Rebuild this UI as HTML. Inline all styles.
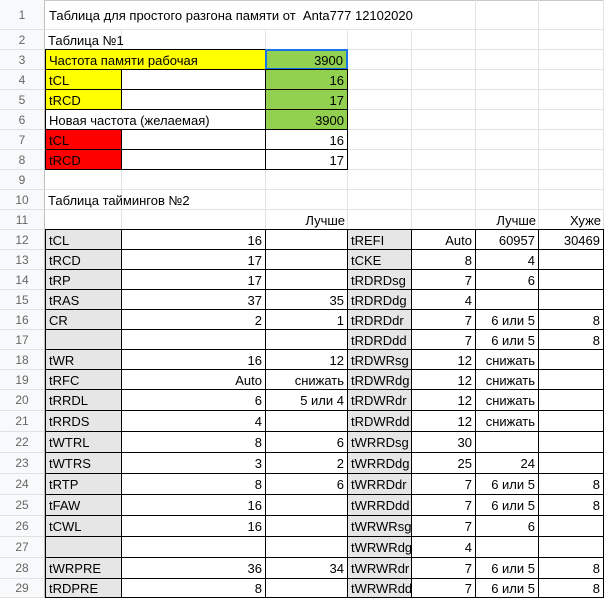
<!DOCTYPE html>
<html style="width:604px;height:598px;overflow:hidden"><head><meta charset="utf-8">
<style>
body{margin:0;width:604px;height:598px;overflow:hidden;background:#fff;position:relative;font-family:"Liberation Sans",Arial,sans-serif;font-size:13px;color:#000}
.c{position:absolute;box-sizing:border-box;overflow:hidden;white-space:nowrap;padding:1px 3px 0 3px;display:flex;align-items:center}
.r{justify-content:flex-end}
.h{position:absolute;left:0;width:45px;background:#f8f9fa;color:#666;font-size:12px;display:flex;align-items:center;justify-content:center;box-sizing:border-box;border-right:1px solid #c0c0c0;border-bottom:1px solid #e0e0e0}
.g{position:absolute;background:#e2e3e3}
</style></head><body>
<script>
const X=[46,122,266,348,412,476,539,604];
const tops={};tops[1]=0;for(let r=2;r<=19;r++)tops[r]=30+(r-2)*20;for(let r=20;r<=29;r++)tops[r]=390+(r-20)*21;tops[30]=598;
const H=r=>tops[r+1]-tops[r];
let out='';
for(let r=2;r<=29;r++)out+=`<div class="g" style="left:45px;top:${tops[r]-1}px;width:559px;height:1px"></div>`;
out+=`<div class="g" style="left:0;top:0;width:604px;height:1px;background:#c8c8c8"></div>`;
for(let i=1;i<X.length;i++){let top=(i>=5)?0:30;out+=`<div class="g" style="left:${X[i]-1}px;top:${top}px;width:1px;height:${598-top}px"></div>`;}
for(let r=1;r<=29;r++)out+=`<div class="h" style="top:${tops[r]}px;height:${H(r)}px">${r}</div>`;
function cell(r,c1,c2,txt,opt={}){
 const l=X[c1],w=X[c2+1]-X[c1];
 let h=H(r)+1; if(tops[r]-1+h>598)h=598-(tops[r]-1);
 out+=`<div class="c ${opt.right?'r':''}" style="left:${l-1}px;top:${tops[r]-1}px;width:${Math.min(w+1,604-(l-1))}px;height:${h}px;background:${opt.bg||'transparent'};${opt.bd?'border:1px solid #000;':''}${opt.st||''}">${txt}</div>`;
}
out+=`<div class="c" style="left:46px;top:0;height:30px;width:400px">Таблица для простого разгона памяти от&nbsp; Anta777 12102020</div>`;
cell(2,0,1,'Таблица №1');
const Y='#ffff00',G='#92d050',R='#ff0000';
cell(3,0,1,'Частота памяти рабочая',{bg:Y,bd:1});
cell(3,2,2,'3900',{bg:G,bd:1,right:1,st:'border:2px solid #1a73e8;'});
cell(4,0,0,'tCL',{bg:Y,bd:1});cell(4,1,1,'',{bd:1});cell(4,2,2,'16',{bg:G,bd:1,right:1});
cell(5,0,0,'tRCD',{bg:Y,bd:1});cell(5,1,1,'',{bd:1});cell(5,2,2,'17',{bg:G,bd:1,right:1});
cell(6,0,1,'Новая частота (желаемая)',{bd:1,bg:'#fff'});cell(6,2,2,'3900',{bg:G,bd:1,right:1});
cell(7,0,0,'tCL',{bg:R,bd:1});cell(7,1,1,'',{bd:1});cell(7,2,2,'16',{bd:1,right:1});
cell(8,0,0,'tRCD',{bg:R,bd:1});cell(8,1,1,'',{bd:1});cell(8,2,2,'17',{bd:1,right:1});
cell(10,0,2,'Таблица таймингов №2');
cell(11,2,2,'Лучше',{right:1});cell(11,5,5,'Лучше',{right:1});cell(11,6,6,'Хуже',{right:1});
const D=[
['tCL','16','','tREFI','Auto','60957','30469'],
['tRCD','17','','tCKE','8','4',''],
['tRP','17','','tRDRDsg','7','6',''],
['tRAS','37','35','tRDRDdg','4','',''],
['CR','2','1','tRDRDdr','7','6 или 5','8'],
['','','','tRDRDdd','7','6 или 5','8'],
['tWR','16','12','tRDWRsg','12','снижать',''],
['tRFC','Auto','снижать','tRDWRdg','12','снижать',''],
['tRRDL','6','5 или 4','tRDWRdr','12','снижать',''],
['tRRDS','4','','tRDWRdd','12','снижать',''],
['tWTRL','8','6','tWRRDsg','30','',''],
['tWTRS','3','2','tWRRDdg','25','24',''],
['tRTP','8','6','tWRRDdr','7','6 или 5','8'],
['tFAW','16','','tWRRDdd','7','6 или 5','8'],
['tCWL','16','','tWRWRsg','7','6',''],
['','','','tWRWRdg','4','',''],
['tWRPRE','36','34','tWRWRdr','7','6 или 5','8'],
['tRDPRE','8','','tWRWRdd','7','6 или 5','8']];
D.forEach((row,i)=>{const r=12+i;row.forEach((t,c)=>{const gray=(c==0||c==3);cell(r,c,c,t,{bd:1,bg:gray?'#e6e6e6':'#fff',right:!gray});});});
document.body.innerHTML+=out;
</script>
</body></html>
